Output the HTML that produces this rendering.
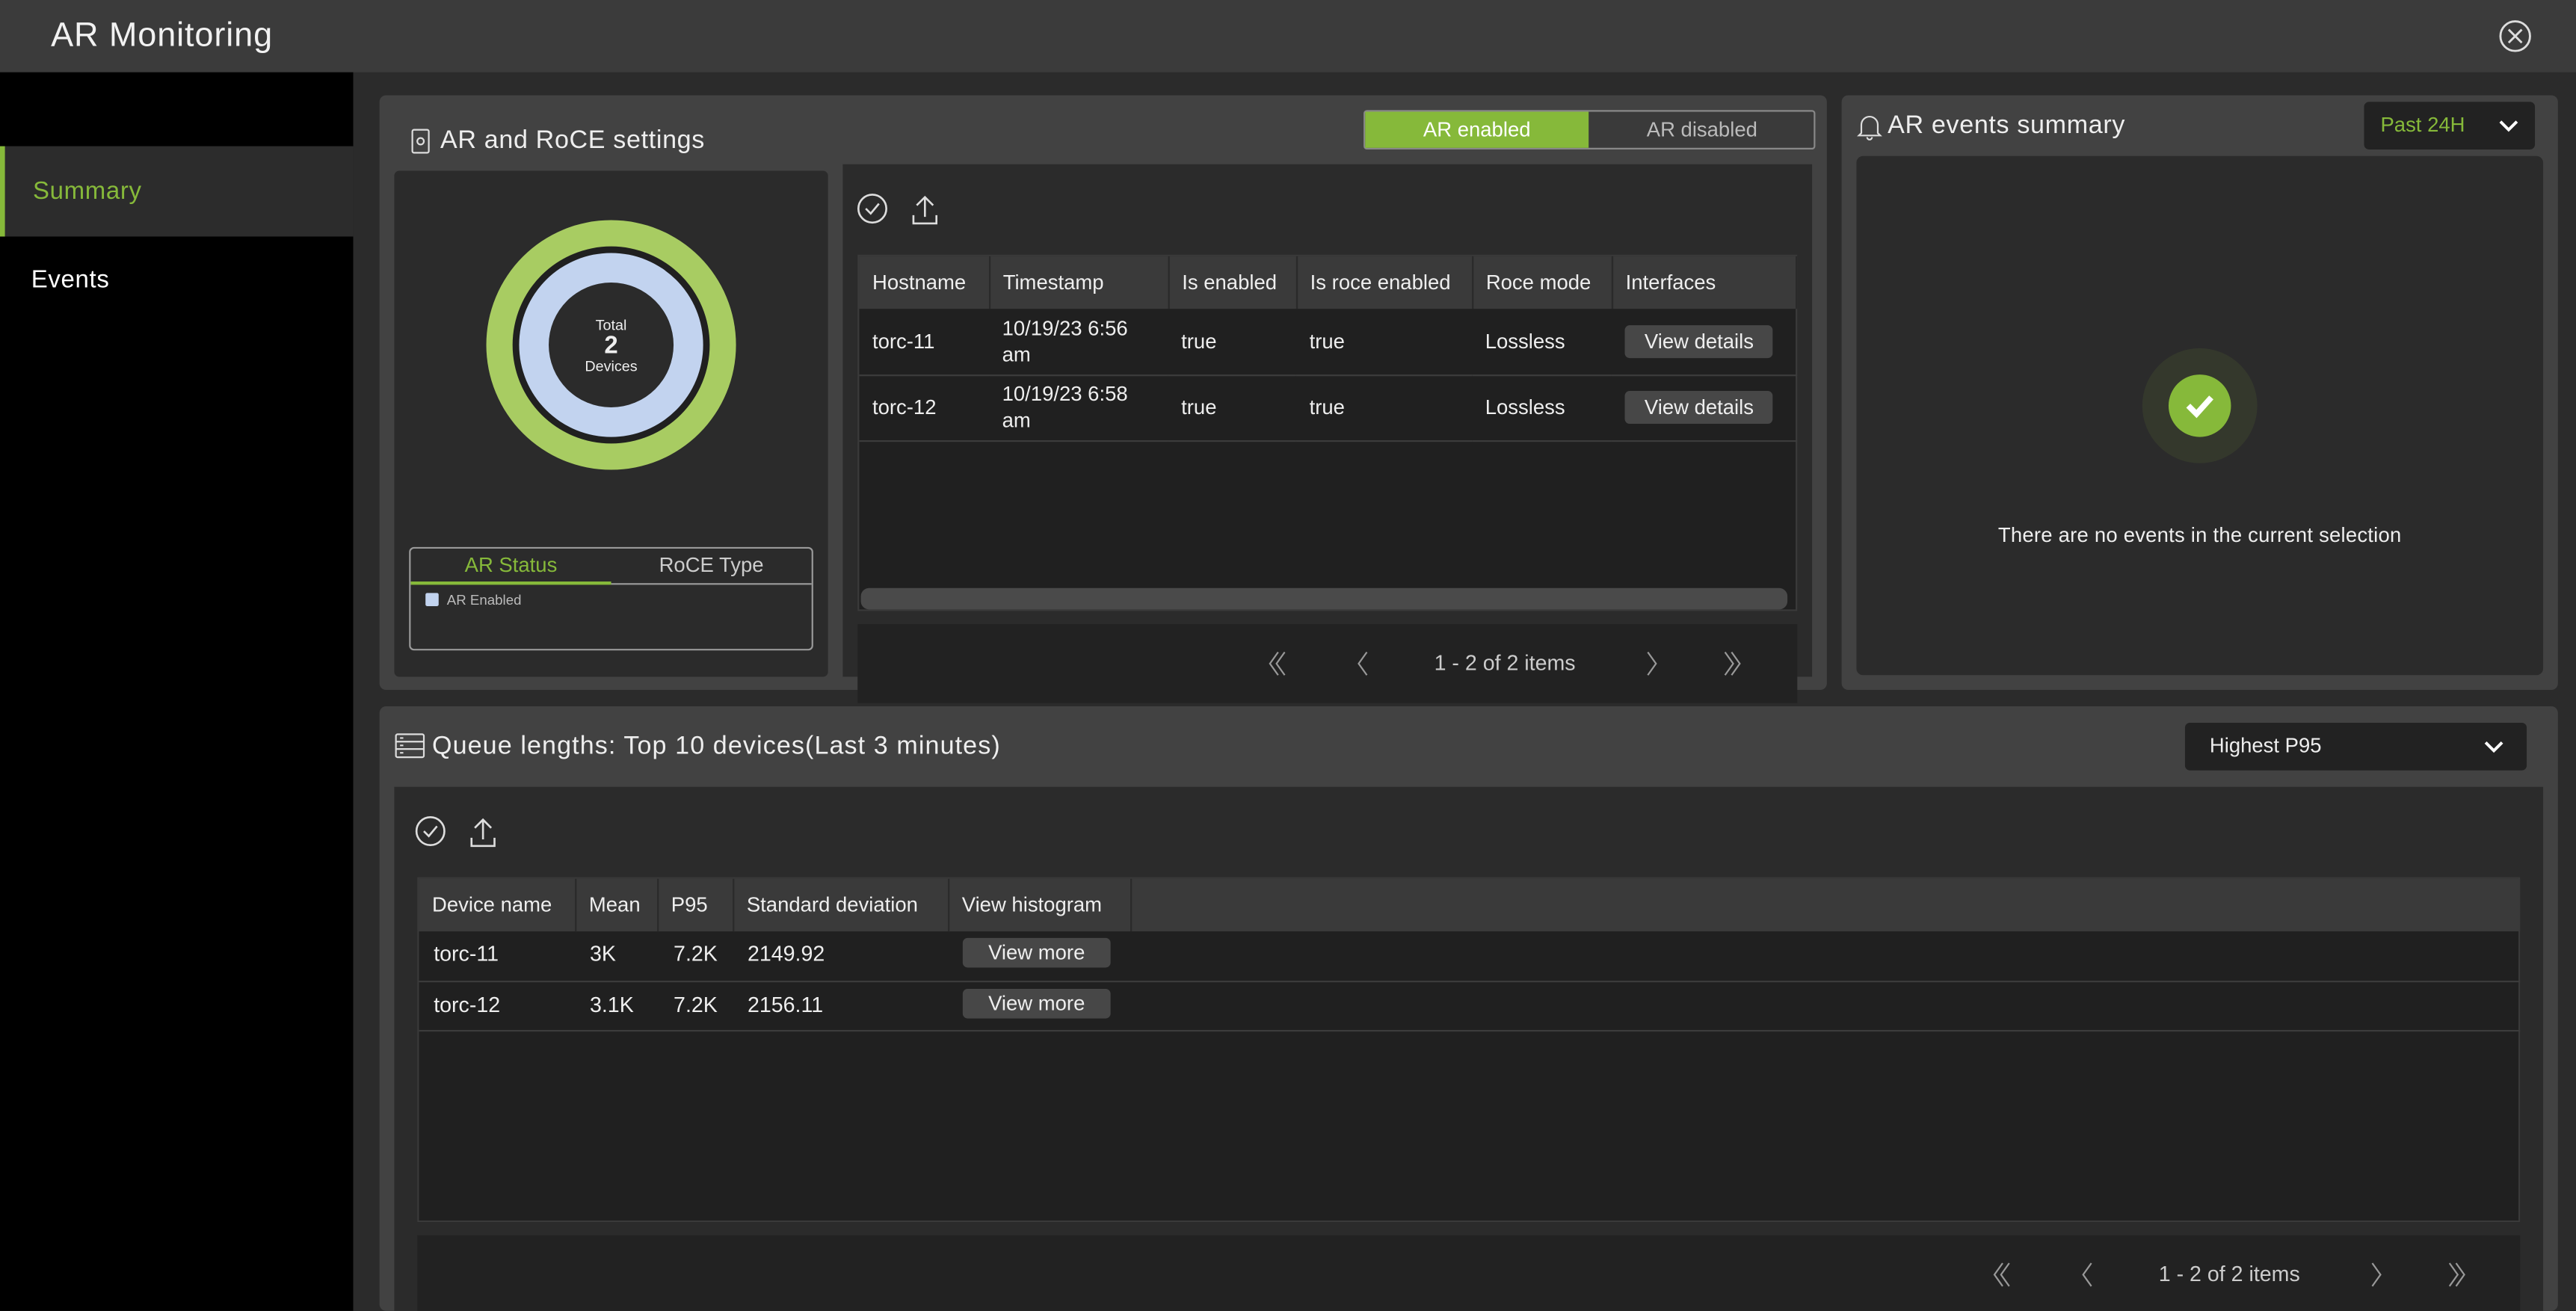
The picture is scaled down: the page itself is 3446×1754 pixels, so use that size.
<!DOCTYPE html>
<html><head><meta charset="utf-8"><style>
*{box-sizing:border-box;margin:0;padding:0}
html,body{width:3446px;height:1754px;overflow:hidden;background:#2a2a2a}
#s{position:absolute;left:0;top:0;width:1568px;height:798px;transform:scale(2.19770);transform-origin:0 0;font-family:"Liberation Sans",sans-serif;color:#eee;background:#2b2b2b}
.a{position:absolute}
.t{font-size:13px;color:#eee}
table{border-collapse:collapse;font-size:12.5px}
th{background:#3a3a3a;font-weight:normal;text-align:left;padding:0 8px;height:32px;border-right:1px solid #2a2a2a;color:#eee}
td{padding:0 8px;color:#eee;border-bottom:1px solid #3c3c3c}
.btn{background:#474747;border-radius:3px;padding:3px 12px;display:inline-block;font-size:12.5px}
</style></head><body><div id="s">
<div class="a" style="left:0;top:0;width:1568px;height:44px;background:#3b3b3b"></div>
<div class="a" style="left:31px;top:10px;font-size:20.5px;color:#f2f2f2;letter-spacing:0.4px">AR Monitoring</div>
<svg class="a" style="left:1520px;top:11px" width="22" height="22" viewBox="0 0 22 22"><circle cx="11" cy="11" r="9" fill="none" stroke="#ddd" stroke-width="1.3"/><path d="M7 7L15 15M15 7L7 15" stroke="#ddd" stroke-width="1.3"/></svg>
<div class="a" style="left:0;top:44px;width:215px;height:754px;background:#000"></div>
<div class="a" style="left:0;top:89px;width:215px;height:55px;background:#2c2c2c;border-left:3px solid #86b93a"></div>
<div class="a" style="left:20px;top:108px;font-size:15px;color:#86b93a;letter-spacing:0.3px">Summary</div>
<div class="a" style="left:19px;top:162px;font-size:15px;color:#fff;letter-spacing:0.3px">Events</div>

<div class="a" style="left:231px;top:58px;width:881px;height:362px;background:#424242;border-radius:4px"></div>
<svg class="a" style="left:250px;top:78px" width="12" height="16" viewBox="0 0 12 16"><rect x="1" y="1" width="10" height="14" rx="1" fill="none" stroke="#ddd"/><circle cx="6" cy="8" r="2" fill="none" stroke="#ddd"/></svg>
<div class="a" style="left:268px;top:77px;font-size:15.5px;letter-spacing:0.3px">AR and RoCE settings</div>
<div class="a" style="left:830px;top:67px;width:275px;height:24px;border:1px solid #888;border-radius:2px;background:#3a3a3a"></div>
<div class="a" style="left:831px;top:68px;width:136px;height:22px;background:#86b93a;color:#fff;font-size:12.5px;text-align:center;line-height:22px">AR enabled</div>
<div class="a" style="left:968px;top:68px;width:136px;height:22px;color:#bbb;font-size:12.5px;text-align:center;line-height:22px">AR disabled</div>
<div class="a" style="left:240px;top:104px;width:264px;height:308px;background:#2b2b2b;border-radius:3px"></div>
<div class="a" style="left:296px;top:134px;width:152px;height:152px;border-radius:50%;background:#a8cc62"></div>
<div class="a" style="left:312px;top:150px;width:120px;height:120px;border-radius:50%;background:#202020"></div>
<div class="a" style="left:316px;top:154px;width:112px;height:112px;border-radius:50%;background:#c2d3ef"></div>
<div class="a" style="left:334px;top:172px;width:76px;height:76px;border-radius:50%;background:#2b2b2b;text-align:center;font-size:9px;line-height:11px;padding-top:21px">Total<br><span style="font-size:15px;line-height:14px;font-weight:bold">2</span><br>Devices</div>
<div class="a" style="left:249px;top:333px;width:246px;height:63px;border:1px solid #999;border-radius:3px"></div>
<div class="a" style="left:250px;top:334px;width:122px;height:22px;border-bottom:2px solid #86b93a;color:#86b93a;font-size:12.5px;text-align:center;line-height:21px">AR Status</div>
<div class="a" style="left:372px;top:334px;width:122px;height:22px;border-bottom:1px solid #999;color:#ccc;font-size:12.5px;text-align:center;line-height:21px">RoCE Type</div>
<div class="a" style="left:259px;top:361px;width:8px;height:8px;background:#c2d3ef;border-radius:1px"></div>
<div class="a" style="left:272px;top:360px;font-size:8.5px;color:#bbb">AR Enabled</div>
<div class="a" style="left:513px;top:100px;width:590px;height:312px;background:#2b2b2b"></div>
<svg class="a" style="left:521px;top:117px" width="56" height="22" viewBox="0 0 56 22"><circle cx="10" cy="10" r="8.5" fill="none" stroke="#ddd" stroke-width="1.2"/><path d="M6 10l3 3 5-6" fill="none" stroke="#ddd" stroke-width="1.2"/><path d="M42 3v12M37 8l5-5 5 5M35 14v5h14v-5" fill="none" stroke="#ddd" stroke-width="1.2"/></svg>
<div class="a" style="left:522px;top:155px;width:572px;height:217px;background:#202020;border:1px solid #3a3a3a">
<table style="width:571px"><tr><th style="width:79px">Hostname</th><th style="width:109px">Timestamp</th><th style="width:78px">Is enabled</th><th style="width:107px">Is roce enabled</th><th style="width:85px">Roce mode</th><th>Interfaces</th></tr>
<tr style="height:40px"><td>torc-11</td><td style="line-height:16px">10/19/23 6:56<br>am</td><td>true</td><td>true</td><td>Lossless</td><td><span class="btn">View details</span></td></tr>
<tr style="height:40px"><td>torc-12</td><td style="line-height:16px">10/19/23 6:58<br>am</td><td>true</td><td>true</td><td>Lossless</td><td><span class="btn">View details</span></td></tr></table>
<div class="a" style="left:1px;top:202px;width:564px;height:13px;background:#4a4a4a;border-radius:5px"></div></div>
<div class="a" style="left:522px;top:380px;width:572px;height:48px;background:#222"></div>
<svg class="a" style="left:770px;top:396px" width="300" height="16" viewBox="0 0 300 16"><g fill="none" stroke="#999" stroke-width="1"><path d="M8 1l-5 7 5 7M12 1l-5 7 5 7M62 1l-5 7 5 7M233 1l5 7-5 7M280 1l5 7-5 7M284 1l5 7-5 7"/></g></svg>
<div class="a" style="left:873px;top:396px;font-size:13px;color:#ccc">1 - 2 of 2 items</div>

<div class="a" style="left:1121px;top:58px;width:436px;height:362px;background:#424242;border-radius:4px"></div>
<svg class="a" style="left:1130px;top:68px" width="16" height="18" viewBox="0 0 16 18"><path d="M3 13V8a5 5 0 0110 0v5l1.5 1.5h-13z M6.5 15.5a1.5 1.5 0 003 0" fill="none" stroke="#ddd" stroke-width="1"/></svg>
<div class="a" style="left:1149px;top:68px;font-size:15.5px;letter-spacing:0.3px">AR events summary</div>
<div class="a" style="left:1439px;top:62px;width:104px;height:29px;background:#222;border-radius:3px"></div>
<div class="a" style="left:1449px;top:69px;font-size:12.5px;color:#86b93a">Past 24H</div>
<svg class="a" style="left:1520px;top:72px" width="14" height="10" viewBox="0 0 14 10"><path d="M2 2l5 5 5-5" fill="none" stroke="#fff" stroke-width="1.8"/></svg>
<div class="a" style="left:1130px;top:95px;width:418px;height:316px;background:#2b2b2b;border-radius:4px"></div>
<div class="a" style="left:1304px;top:212px;width:70px;height:70px;border-radius:50%;background:#34382c"></div>
<div class="a" style="left:1320px;top:228px;width:38px;height:38px;border-radius:50%;background:#86b93a"></div>
<svg class="a" style="left:1320px;top:228px" width="38" height="38" viewBox="0 0 38 38"><path d="M12 19l5 5 9-10" fill="none" stroke="#fff" stroke-width="3.5"/></svg>
<div class="a" style="left:1130px;top:319px;width:418px;text-align:center;font-size:12.5px;letter-spacing:0.1px">There are no events in the current selection</div>

<div class="a" style="left:231px;top:430px;width:1326px;height:368px;background:#424242;border-radius:4px"></div>
<svg class="a" style="left:240px;top:446px" width="19" height="16" viewBox="0 0 19 16"><rect x="1" y="1" width="17" height="14" rx="1" fill="none" stroke="#ddd"/><path d="M1 5.5h17M1 10h17M3.5 3.3h2M3.5 7.8h2M3.5 12.3h2" stroke="#ddd"/></svg>
<div class="a" style="left:263px;top:446px;font-size:15.5px;letter-spacing:0.5px">Queue lengths: Top 10 devices(Last 3 minutes)</div>
<div class="a" style="left:1330px;top:440px;width:208px;height:29px;background:#222;border-radius:3px"></div>
<div class="a" style="left:1345px;top:447px;font-size:12.5px">Highest P95</div>
<svg class="a" style="left:1511px;top:450px" width="14" height="10" viewBox="0 0 14 10"><path d="M2 2l5 5 5-5" fill="none" stroke="#fff" stroke-width="1.8"/></svg>
<div class="a" style="left:240px;top:479px;width:1308px;height:319px;background:#2b2b2b"></div>
<svg class="a" style="left:252px;top:496px" width="56" height="22" viewBox="0 0 56 22"><circle cx="10" cy="10" r="8.5" fill="none" stroke="#ddd" stroke-width="1.2"/><path d="M6 10l3 3 5-6" fill="none" stroke="#ddd" stroke-width="1.2"/><path d="M42 3v12M37 8l5-5 5 5M35 14v5h14v-5" fill="none" stroke="#ddd" stroke-width="1.2"/></svg>
<div class="a" style="left:254px;top:534px;width:1280px;height:210px;background:#202020;border:1px solid #3a3a3a">
<div class="a" style="left:0;top:0;width:1279px;height:32px;background:#3a3a3a"></div>
<table style="position:relative"><tr><th style="width:95px">Device name</th><th style="width:50px">Mean</th><th style="width:46px">P95</th><th style="width:131px">Standard deviation</th><th style="width:111px">View histogram</th></tr></table>
<div class="a" style="left:0;top:62px;width:1279px;border-top:1px solid #3c3c3c"></div>
<div class="a" style="left:0;top:92px;width:1279px;border-top:1px solid #3c3c3c"></div>
<div class="a t" style="left:9px;top:38px">torc-11</div><div class="a t" style="left:104px;top:38px">3K</div><div class="a t" style="left:155px;top:38px">7.2K</div><div class="a t" style="left:200px;top:38px">2149.92</div><span class="a btn" style="left:331px;top:36px;padding:2px 12px;width:90px;text-align:center">View more</span>
<div class="a t" style="left:9px;top:69px">torc-12</div><div class="a t" style="left:104px;top:69px">3.1K</div><div class="a t" style="left:155px;top:69px">7.2K</div><div class="a t" style="left:200px;top:69px">2156.11</div><span class="a btn" style="left:331px;top:67px;padding:2px 12px;width:90px;text-align:center">View more</span>
</div>
<div class="a" style="left:254px;top:752px;width:1280px;height:46px;background:#222"></div>
<svg class="a" style="left:1211px;top:768px" width="300" height="16" viewBox="0 0 300 16"><g fill="none" stroke="#999" stroke-width="1"><path d="M8 1l-5 7 5 7M12 1l-5 7 5 7M62 1l-5 7 5 7M233 1l5 7-5 7M280 1l5 7-5 7M284 1l5 7-5 7"/></g></svg>
<div class="a" style="left:1314px;top:768px;font-size:13px;color:#ccc">1 - 2 of 2 items</div>
</div></body></html>
